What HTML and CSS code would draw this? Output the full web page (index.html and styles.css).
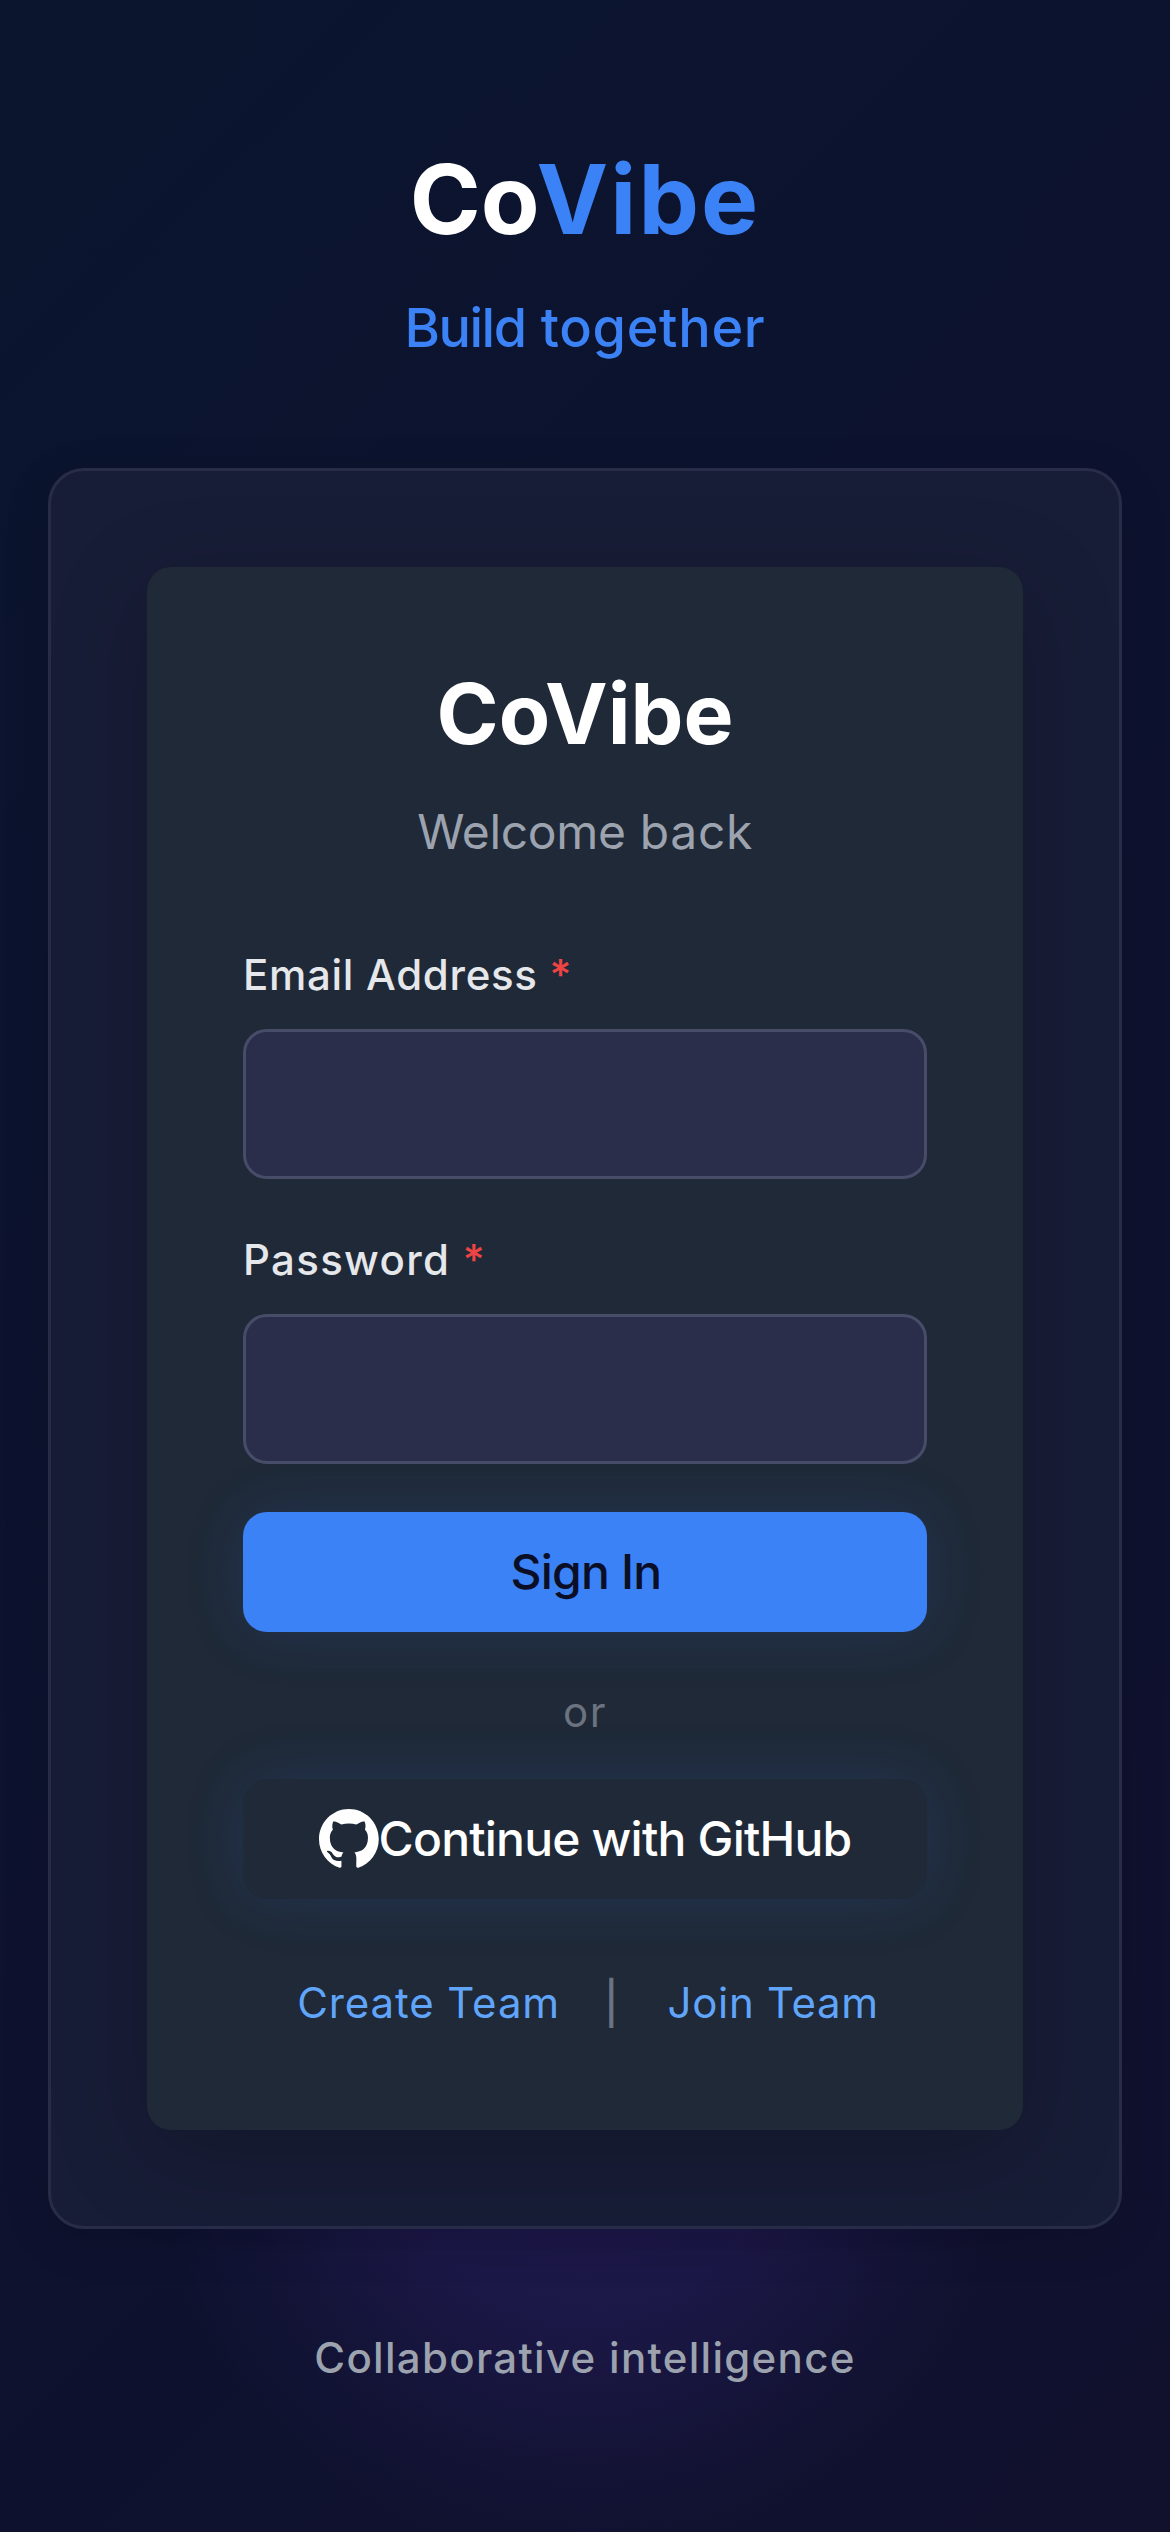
FILE: index.html
```html
<!DOCTYPE html>
<html lang="en">
<head>
<meta charset="utf-8">
<title>CoVibe</title>
<link rel="stylesheet" href="styles.css">
</head>
<body>
<div class="screen">
  <header class="brand">
    <h1 class="logo">Co<span class="logo-accent">Vibe</span></h1>
    <p class="tagline"><span class="tight">Build</span> together</p>
  </header>
  <main class="panel">
    <form class="card">
      <h2 class="card-title">CoVibe</h2>
      <p class="card-subtitle"><span class="snug">Welcome</span> back</p>
      <div class="field">
        <label class="label" for="email">Email Address <span class="required">*</span></label>
        <input class="input" id="email" type="email">
      </div>
      <div class="field">
        <label class="label label-wide" for="password">Password <span class="required">*</span></label>
        <input class="input" id="password" type="password">
      </div>
      <button class="button button-primary" type="button">Sign In</button>
      <p class="divider">or</p>
      <button class="button button-github" type="button">
        <svg class="icon" viewBox="0 0 98 98" aria-hidden="true"><path fill="currentColor" d="M48.854 0C21.839 0 0 22 0 49.217c0 21.756 13.993 40.172 33.405 46.69 2.427.49 3.316-1.059 3.316-2.362 0-1.141-.08-5.052-.08-9.127-13.59 2.934-16.42-5.867-16.42-5.867-2.184-5.704-5.42-7.17-5.42-7.17-4.448-3.015.324-3.015.324-3.015 4.934.326 7.523 5.052 7.523 5.052 4.367 7.496 11.404 5.378 14.235 4.074.404-3.178 1.699-5.378 3.074-6.6-10.839-1.141-22.243-5.378-22.243-24.283 0-5.378 1.94-9.778 5.014-13.2-.485-1.222-2.184-6.275.486-13.038 0 0 4.125-1.304 13.426 5.052a46.97 46.97 0 0 1 12.214-1.63c4.125 0 8.33.571 12.213 1.63 9.302-6.356 13.427-5.052 13.427-5.052 2.67 6.763.97 11.816.485 13.038 3.155 3.422 5.015 7.822 5.015 13.2 0 18.905-11.404 23.06-22.324 24.283 1.78 1.548 3.316 4.481 3.316 9.126 0 6.6-.08 11.897-.08 13.526 0 1.304.89 2.853 3.316 2.364 19.412-6.52 33.405-24.935 33.405-46.691C97.707 22 75.788 0 48.854 0z"/></svg>Continue with GitHub
      </button>
      <nav class="links">
        <a class="link link-create">Create Team</a>
        <span class="separator">|</span>
        <a class="link link-join">Join Team</a>
      </nav>
    </form>
  </main>
  <footer class="footer">Collaborative intelligence</footer>
</div>
</body>
</html>
```
FILE: styles.css
```css
* {
  box-sizing: border-box;
  margin: 0;
}

.screen {
  width: 1170px;
  height: 2532px;
  display: flex;
  flex-direction: column;
  padding: 142px 48px 0;
  overflow: hidden;
  font-family: Inter, sans-serif;
  background:
    radial-gradient(circle 430px at 585px 2130px, rgba(45, 32, 105, 0.46) 0%, rgba(45, 32, 105, 0.4) 45%, rgba(45, 32, 105, 0.12) 80%, rgba(45, 32, 105, 0) 100%),
    linear-gradient(135deg, #0b152e 0%, #0d122f 50%, #11112e 100%);
}

.brand {
  height: 326px;
  text-align: center;
}

.logo {
  font-size: 96px;
  line-height: 114px;
  font-weight: 700;
  color: #fff;
}

.logo-accent {
  margin-left: -3px;
  letter-spacing: 2.1px;
  color: #3b82f6;
}

.tagline {
  margin-top: 36px;
  font-size: 54px;
  line-height: 72px;
  font-weight: 500;
  letter-spacing: 0.7px;
  color: #3b82f6;
}

.tight {
  letter-spacing: -1.5px;
}

.snug {
  letter-spacing: -0.3px;
}

.panel {
  height: 1761px;
  padding: 96px;
  border: 3px solid #282c49;
  border-radius: 36px;
  background: #181d37;
  box-shadow: 0 12px 48px rgba(0, 0, 0, 0.12);
}

.card {
  height: 1563px;
  padding: 96px;
  border-radius: 24px;
  background: #1f2937;
  box-shadow: 0 24px 96px rgba(0, 0, 0, 0.22);
}

.card-title {
  font-size: 84px;
  line-height: 102px;
  font-weight: 700;
  text-align: center;
  color: #fff;
}

.card-subtitle {
  margin: 31px 0 75px;
  font-size: 48px;
  line-height: 72px;
  letter-spacing: 0.6px;
  text-align: center;
  color: #9ca3af;
}

.field {
  display: flex;
  flex-direction: column;
  gap: 23px;
  margin-bottom: 49px;
}

.field + .field {
  margin-bottom: 48px;
}

.label {
  height: 63px;
  font-size: 42px;
  line-height: 63px;
  font-weight: 500;
  letter-spacing: 0.7px;
  color: #e5e7eb;
}

.label-wide {
  letter-spacing: 1.3px;
}

.required {
  color: #ef4444;
}

.input {
  width: 100%;
  height: 150px;
  border: 3px solid #474c69;
  border-radius: 24px;
  background: #2b2e4a;
}

.button {
  display: flex;
  align-items: center;
  justify-content: center;
  width: 100%;
  height: 120px;
  padding: 0;
  border: 0;
  border-radius: 24px;
  font: 500 48px/72px Inter, sans-serif;
  letter-spacing: -0.8px;
  box-shadow: 0 0 60px rgba(59, 130, 246, 0.15);
}

.button-primary {
  padding-left: 2px;
  background: #3b82f6;
  color: #0a0e27;
}

.button-github {
  background: #1f2937;
  color: #fff;
}

.icon {
  width: 60px;
  height: 60px;
}

.divider {
  padding: 48px 0 36px;
  font-size: 42px;
  line-height: 63px;
  letter-spacing: 1.5px;
  text-align: center;
  color: #6b7280;
}

.links {
  display: flex;
  justify-content: center;
  gap: 48px;
  margin-top: 72px;
  padding-left: 6px;
  font-size: 42px;
  line-height: 63px;
  letter-spacing: 0.9px;
}

.link {
  color: #60a5fa;
}

.link-create {
  margin-right: -4px;
}

.link-join {
  letter-spacing: 0.7px;
}

.separator {
  font-weight: 500;
  color: #6b7280;
}

.footer {
  margin-top: 97px;
  font-size: 42px;
  line-height: 63px;
  font-weight: 500;
  letter-spacing: 1.3px;
  text-align: center;
  color: #9ca3af;
}
```
